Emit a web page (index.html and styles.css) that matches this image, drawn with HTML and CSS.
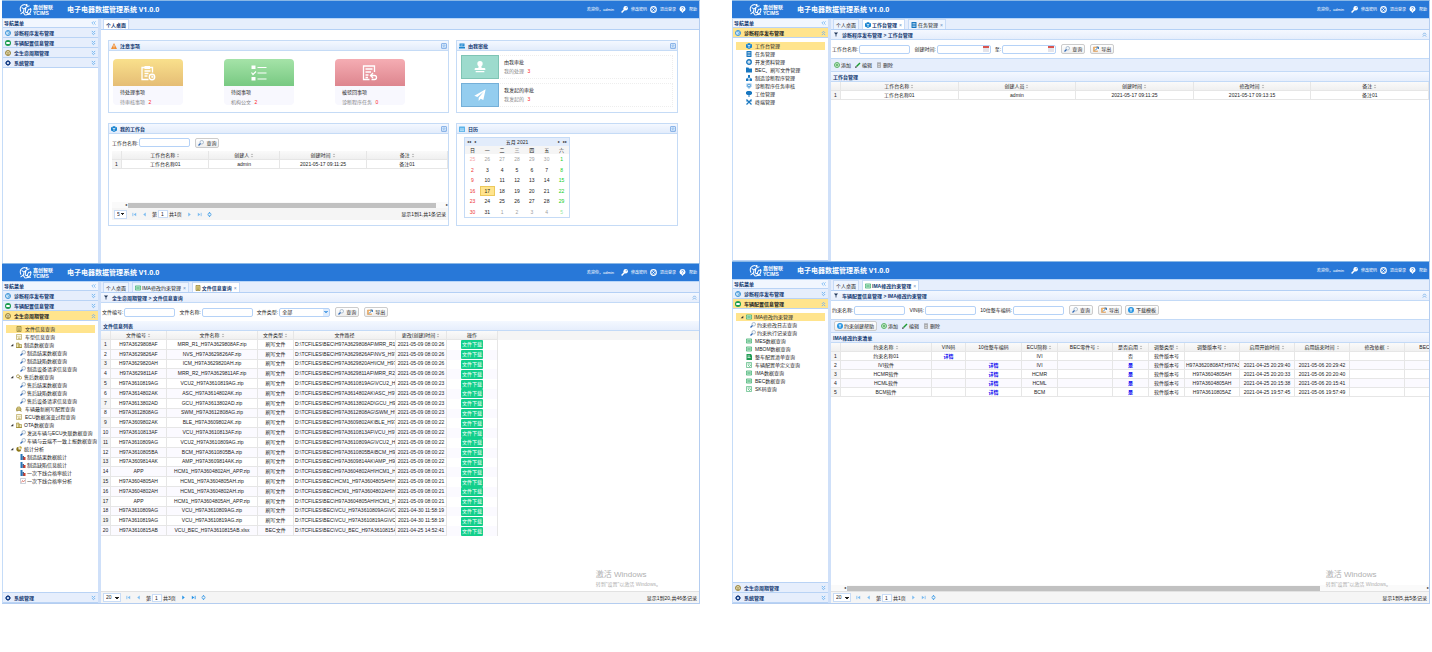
FILE: index.html
```html
<!DOCTYPE html>
<html lang="zh-CN">
<head>
	<meta charset="utf-8">
	<title>电子电器数据管理系统 V1.0.0</title>
	<meta name="viewport" content="width=device-width, initial-scale=1">
	<link rel="stylesheet" href="styles.css">
</head>
<body>

<!-- icon sprite -->
<svg class="sprite" aria-hidden="true">
	<symbol id="logo" viewBox="0 0 36 36"><g fill="none" stroke="#fff" stroke-width="2.800" stroke-linecap="round"><path d="M5 23C0 11 8 4 17 4M32 15c3 9-3 17-13 18"/><path d="M8 13l6 4 5-5 9-4M14 17l-2 8-7 5M19 13l-2 12 5 2M33 17h-6l-4 8 3 6h6M12 27l5 6"/></g><circle cx="21" cy="6" r="3" fill="#fff"/></symbol>
	<symbol id="key" viewBox="0 0 12 12"><circle cx="8" cy="4" r="3.800" fill="#fff"/><circle cx="9" cy="3" r="1" fill="#2878d8"/><path d="M6 6L1 11" stroke="#fff" stroke-width="2.600"/></symbol>
	<symbol id="exit" viewBox="0 0 12 12"><circle cx="6" cy="6" r="4.800" fill="none" stroke="#fff" stroke-width="2"/><path d="M4 4l4 4M8 4L4 8" stroke="#fff" stroke-width="1.500"/></symbol>
	<symbol id="help" viewBox="0 0 12 12"><path d="M6 0a5 5 0 0 1 2 9.600L6 12 4 9.600A5 5 0 0 1 6 0z" fill="#fff"/><path d="M4.500 4a1.600 1.600 0 1 1 2 1.500L6 6.500M6 7.500v1" fill="none" stroke="#2878d8" stroke-width="1.200"/></symbol>
	<symbol id="diag" viewBox="0 0 12 12"><circle cx="6" cy="6" r="5" fill="#d8ecfa" stroke="#3a93d6" stroke-width="2"/><path d="M4 3.500h3a2 2 0 0 1 0 4H6V9" fill="none" stroke="#3a93d6" stroke-width="1.500"/></symbol>
	<symbol id="car" viewBox="0 0 12 12"><circle cx="6" cy="6" r="6" fill="#1b9c50"/><rect x="2.500" y="4" width="7" height="4" rx="1" fill="#fff"/></symbol>
	<symbol id="life" viewBox="0 0 12 12"><circle cx="6" cy="6" r="5" fill="#e5dcb4" stroke="#8f7a2c" stroke-width="1.800"/><path d="M3 4l3 2.500L9 4M4 8.500h4" fill="none" stroke="#8f7a2c" stroke-width="1.400"/></symbol>
	<symbol id="gear" viewBox="0 0 12 12"><circle cx="6" cy="6" r="3.400" fill="none" stroke="#173f86" stroke-width="2.400"/><path d="M6 0v2M6 10v2M0 6h2M10 6h2M2 2l1.500 1.500M8.500 8.500L10 10M2 10l1.500-1.500M8.500 3.500L10 2" stroke="#173f86" stroke-width="2"/></symbol>
	<symbol id="down2" viewBox="0 0 12 12"><path d="M2 1l4 4 4-4M2 6l4 4 4-4" fill="none" stroke="#6cb2f0" stroke-width="2.200"/></symbol>
	<symbol id="up2" viewBox="0 0 12 12"><path d="M2 6l4-4 4 4M2 11l4-4 4 4" fill="none" stroke="#7bb2e8" stroke-width="2.200"/></symbol>
	<symbol id="left2" viewBox="0 0 12 12"><path d="M6 2L2 6l4 4M11 2L7 6l4 4" fill="none" stroke="#7abaf3" stroke-width="2"/></symbol>
	<symbol id="warn" viewBox="0 0 12 12"><path d="M6 0l6 12H0z" fill="#ee8d32"/><path d="M6 4v4M6 9v1.500" stroke="#fff" stroke-width="1.400"/></symbol>
	<symbol id="cube" viewBox="0 0 12 12"><path d="M6 0l6 3v6l-6 3-6-3V3z" fill="#1783cf"/><path d="M3 4l3 1.500L9 4M6 5.500V10" fill="none" stroke="#fff" stroke-width="1.400"/></symbol>
	<symbol id="inbox" viewBox="0 0 12 12"><path d="M1 1h10v6H1zM0 8h12v3H0z" fill="#1c86cf"/><path d="M3 3.500h6M3 5.500h4" stroke="#c9e5f8"/></symbol>
	<symbol id="cal" viewBox="0 0 12 12"><rect x="0" y="1" width="12" height="11" rx="1" fill="#5cb4ea"/><path d="M2 6h8M2 9h8M4 4v7M8 4v7" stroke="#dff1fd"/></symbol>
	<symbol id="list" viewBox="0 0 12 12"><rect x="1" width="10" height="12" rx="1" fill="#1877c0"/><path d="M3 3h6M3 6h6M3 9h6" stroke="#fff" stroke-width="1.100"/></symbol>
	<symbol id="ring" viewBox="0 0 12 12"><circle cx="6" cy="6" r="4.500" fill="none" stroke="#1877c0" stroke-width="2.800"/><circle cx="6" cy="6" r="1.200" fill="#1877c0"/></symbol>
	<symbol id="folder" viewBox="0 0 12 12"><path d="M0 1h5l1 2h6v8H0z" fill="#1877c0"/></symbol>
	<symbol id="tri" viewBox="0 0 12 12"><path d="M4 0h4v5H4zM0 7h5v5H0zM7 7h5v5H7z" fill="#1877c0"/><path d="M2.500 7L6 4l3.500 3" fill="none" stroke="#1877c0" stroke-width="1.500"/></symbol>
	<symbol id="shield" viewBox="0 0 12 12"><path d="M1 1h10v6l-5 5-5-5z" fill="#8cc2ec"/><circle cx="6" cy="5" r="2.500" fill="#fff" stroke="#1877c0" stroke-width="1.200"/></symbol>
	<symbol id="post" viewBox="0 0 12 12"><path d="M0 2l3-2h6l3 2v4L9 8H3L0 6zM5 8h2v4H5z" fill="#1877c0"/></symbol>
	<symbol id="tools" viewBox="0 0 12 12"><path d="M1 1l10 10M11 1L1 11" stroke="#1877c0" stroke-width="2.400"/><path d="M0 4h4M8 4h4" stroke="#1877c0" stroke-width="1.400"/></symbol>
	<symbol id="glass" viewBox="0 0 12 12"><circle cx="7.500" cy="4.500" r="3.600" fill="#f1f7fc" stroke="#8b9fb5" stroke-width="1.200"/><path d="M5 7L1 11" stroke="#2f68b5" stroke-width="2.400"/></symbol>
	<symbol id="docb" viewBox="0 0 12 12"><path d="M2 .8h8v10.400H2z" fill="#e8d98e" stroke="#806d1d" stroke-width="1.300"/><path d="M4 4h4M4 6.500h4M4 9h4" stroke="#806d1d"/></symbol>
	<symbol id="chip" viewBox="0 0 12 12"><path d="M1 1h10v10H1z" fill="#f9f5e0" stroke="#b3a04f" stroke-width="1.300"/><path d="M3 4l3 3 3-3M4 9h5" fill="none" stroke="#b3a04f" stroke-width="1.200"/></symbol>
	<symbol id="store" viewBox="0 0 12 12"><path d="M1 2h5v9H1zM6 5h5v6H6z" fill="#eee5b5" stroke="#9b872d" stroke-width="1.200"/><path d="M0 11h12M3 4h2" stroke="#9b872d" stroke-width="1.400"/></symbol>
	<symbol id="auto" viewBox="0 0 12 12"><path d="M1 6l2-4h5l2 4v3H1z" fill="#e5da9f" stroke="#96822a" stroke-width="1.300"/><path d="M2 9v2M8 9l3 2M1 6h9" stroke="#96822a" stroke-width="1.400"/></symbol>
	<symbol id="link" viewBox="0 0 12 12"><circle cx="4" cy="4.500" r="3" fill="none" stroke="#a08c38" stroke-width="1.500"/><circle cx="8.500" cy="7.500" r="2.800" fill="none" stroke="#a08c38" stroke-width="1.500"/></symbol>
	<symbol id="pie" viewBox="0 0 12 12"><path d="M5 1.500A5 5 0 1 0 10.500 7H5z" fill="#8d7717"/><path d="M7 0a5 5 0 0 1 5 5H7z" fill="#c7b04c"/></symbol>
	<symbol id="bars" viewBox="0 0 12 12"><path d="M1 0h4v12H1z" fill="#2776b8"/><path d="M5 4h3v8H5z" fill="#385f8e"/><path d="M7 6h4v6H7z" fill="#cf3f2c"/></symbol>
	<symbol id="chart" viewBox="0 0 12 12"><path d="M1 1h10v10H1z" fill="#fff" stroke="#98a5b5"/><path d="M3 9l2-4 2 3 3-4" fill="none" stroke="#ce4b3c" stroke-width="1.200"/></symbol>
	<symbol id="tag" viewBox="0 0 12 12"><path d="M.7 2h10.600v8H.7z" fill="#d6f3e1" stroke="#27a35c" stroke-width="1.400"/><path d="M2.500 6h7" stroke="#27a35c" stroke-width="2"/></symbol>
	<symbol id="tagfull" viewBox="0 0 12 12"><path d="M1 0h9l2 3v9H1z" fill="#1f9b53"/><path d="M3 4h5M3 7h6" stroke="#fff" stroke-width="1.400"/></symbol>
	<symbol id="tagbox" viewBox="0 0 12 12"><path d="M1 1h10v10H1z" fill="#f4fcf7" stroke="#27a35c" stroke-width="1.100"/><path d="M3 4h6M4 6l3 3 3-3" fill="none" stroke="#27a35c" stroke-width="1.200"/></symbol>
	<symbol id="export" viewBox="0 0 12 12"><path d="M1 2h8v9H1z" fill="#f2bd7c" stroke="#d98a3c"/><path d="M4 4h7v5H4z" fill="#fff"/><path d="M4 9l6-6M7 2h4v4" fill="none" stroke="#2b72b8" stroke-width="1.800"/></symbol>
	<symbol id="info" viewBox="0 0 12 12"><circle cx="6" cy="6" r="6" fill="#2795e3"/><path d="M3.500 4h5M6 4v5.500" stroke="#fff" stroke-width="1.800"/></symbol>
	<symbol id="add" viewBox="0 0 12 12"><circle cx="6" cy="6" r="5" fill="#eaf8ea" stroke="#2a9d3a" stroke-width="1.500"/><path d="M6 3v6M3 6h6" stroke="#2a9d3a" stroke-width="1.600"/></symbol>
	<symbol id="pen" viewBox="0 0 12 12"><path d="M3 9l7-7" stroke="#1c9a2f" stroke-width="3"/><path d="M0 12l1.500-4L4 10.500z" fill="#222"/></symbol>
	<symbol id="trash" viewBox="0 0 12 12"><path d="M3 3h6v8H3z" fill="#eee" stroke="#777"/><path d="M2 1.500h8M5 5v4M7 5v4" stroke="#777"/></symbol>
	<symbol id="funnel" viewBox="0 0 12 12"><path d="M1 1h10L7 6v5H5V6z" fill="#243b5e"/></symbol>
	<symbol id="tree" viewBox="0 0 12 12"><path d="M10 2v8H2z" fill="#333"/></symbol>
	<symbol id="sort" viewBox="0 0 8 12"><path d="M1 5l3-4 3 4zM1 7l3 4 3-4z" fill="#b7b7b7"/></symbol>
	<symbol id="first" viewBox="0 0 12 12"><path d="M2 2v8" stroke="currentColor" stroke-width="2"/><path d="M10 2v8L4 6z" fill="currentColor"/></symbol>
	<symbol id="prev" viewBox="0 0 12 12"><path d="M9 1v10L3 6z" fill="currentColor"/></symbol>
	<symbol id="next" viewBox="0 0 12 12"><path d="M3 1v10l6-5z" fill="currentColor"/></symbol>
	<symbol id="last" viewBox="0 0 12 12"><path d="M10 2v8" stroke="currentColor" stroke-width="2"/><path d="M2 2v8l6-4z" fill="currentColor"/></symbol>
	<symbol id="reload" viewBox="0 0 12 12"><circle cx="6" cy="6" r="3.600" fill="none" stroke="#3d9be6" stroke-width="2"/><path d="M6 0v3M6 9v3" stroke="#3d9be6" stroke-width="2"/></symbol>
	<symbol id="todo" viewBox="0 0 32 32"><g fill="none" stroke="#fff" stroke-width="2.600"><path d="M25 15V5H4v24h13M9 12h12M9 17h8M9 22h6"/><circle cx="24" cy="24" r="5.500"/><path d="M24 21v3h3"/></g><path d="M9 2h11v6H9z" fill="#fff"/></symbol>
	<symbol id="read" viewBox="0 0 32 32"><path d="M1 1h8v7H1zM1 24h8v7H1z" fill="#fff"/><path d="M13 5h18M13 16h18M13 28h18" stroke="#fff" stroke-width="2.400"/><path d="M1 15l3 4 6-6" fill="none" stroke="#fff" stroke-width="2.400"/></symbol>
	<symbol id="back" viewBox="0 0 32 32"><path d="M25 14V2H3v27h12M7 8h14M7 14h11M7 20h6M7 25h5" fill="none" stroke="#fff" stroke-width="2.600"/><path d="M18 21h7a4 4 0 0 1 0 8h-6M22 16l-5 5 5 5" fill="none" stroke="#fff" stroke-width="2.600"/></symbol>
	<symbol id="stamp" viewBox="0 0 36 36"><circle cx="18" cy="8" r="8" fill="#fff"/><path d="M14 14h8l1 7h8q3 0 3 3v3H2v-3q0-3 3-3h8zM5 30h26v4H5z" fill="#fff"/></symbol>
	<symbol id="plane" viewBox="0 0 36 36"><path d="M35 1L1 20l9 4L29 8 14 26v10l6-7 8 4z" fill="#fff"/></symbol>
</svg>

<main class="screens">

<div class="column">

	<!-- personal desktop -->
	<section class="window window-a">
		<header class="topbar">
			<svg class="logo"><use href="#logo"/></svg>
			<div class="brand"><b>嘉创智联</b><b>YCIMS</b></div>
			<h1>电子电器数据管理系统 V1.0.0</h1>
			<nav class="user"><span class="hello">欢迎你，admin</span><a href="#"><svg><use href="#key"/></svg>修改密码</a><a href="#"><svg><use href="#exit"/></svg>退出登录</a><a href="#"><svg><use href="#help"/></svg>帮助</a></nav>
		</header>
		<div class="body">
			<aside class="sidebar">
				<div class="nav-title">导航菜单<svg><use href="#left2"/></svg></div>
				<button class="nav"><svg><use href="#diag"/></svg>诊断程序发布管理<svg class="fold"><use href="#down2"/></svg></button>
				<button class="nav"><svg><use href="#car"/></svg>车辆配置信息管理<svg class="fold"><use href="#down2"/></svg></button>
				<button class="nav"><svg><use href="#life"/></svg>全生命周期管理<svg class="fold"><use href="#down2"/></svg></button>
				<button class="nav"><svg><use href="#gear"/></svg>系统管理<svg class="fold"><use href="#down2"/></svg></button>
			</aside>
			<div class="content">
				<div class="tabs"><button class="tab active">个人桌面</button></div>
				<div class="desktop">
					<section class="panel panel-top">
						<h2><svg><use href="#warn"/></svg>注意事项<button class="collapse" aria-label="收起"><svg><use href="#up2"/></svg></button></h2>
						<div class="cards">
							<div class="card"><div class="card-top yellow"><svg><use href="#todo"/></svg></div><b>待处理事项</b><span>待审核事项 <em>2</em></span></div>
							<div class="card"><div class="card-top green"><svg><use href="#read"/></svg></div><b>待阅事项</b><span>机构公文 <em>2</em></span></div>
							<div class="card"><div class="card-top red"><svg><use href="#back"/></svg></div><b>被驳回事项</b><span>诊断程序任务 <em>0</em></span></div>
						</div>
					</section>
					<section class="panel panel-top">
						<h2><svg><use href="#inbox"/></svg>由我审批<button class="collapse" aria-label="收起"><svg><use href="#up2"/></svg></button></h2>
						<div class="approvals">
							<div class="approval"><div class="tile mint"><svg><use href="#stamp"/></svg></div><div><b>由我审批</b><span>我的处理 <em>3</em></span></div></div>
							<div class="approval"><div class="tile sky"><svg><use href="#plane"/></svg></div><div><b>我发起的审批</b><span>我发起的 <em>3</em></span></div></div>
						</div>
					</section>
					<section class="panel panel-bottom">
						<h2><svg><use href="#cube"/></svg>我的工作台<button class="collapse" aria-label="收起"><svg><use href="#up2"/></svg></button></h2>
						<div class="bench">
							<form class="filter">
								<label>工作台名称:<input type="text"></label>
								<button type="button" class="btn"><svg><use href="#glass"/></svg>查询</button>
							</form>
							<table class="grid">
								<colgroup><col class="w-num"><col class="w-26"><col class="w-21"><col class="w-26"><col></colgroup>
								<thead><tr><th></th><th>工作台名称<svg><use href="#sort"/></svg></th><th>创建人<svg><use href="#sort"/></svg></th><th>创建时间<svg><use href="#sort"/></svg></th><th>备注<svg><use href="#sort"/></svg></th></tr></thead>
								<tbody><tr><td>1</td><td>工作台名称01</td><td>admin</td><td>2021-05-17 09:11:25</td><td>备注01</td></tr></tbody>
							</table>
							<div class="hscroll"><i>◂</i><div class="thumb"></div><i>▸</i></div>
							<div class="pager">
								<select aria-label="每页条数"><option>5</option></select>
								<button class="dim"><svg><use href="#first"/></svg></button><button class="dim"><svg><use href="#prev"/></svg></button>
								<label>第<input type="text" value="1">共1页</label>
								<button class="dim"><svg><use href="#next"/></svg></button><button class="dim"><svg><use href="#last"/></svg></button><button><svg><use href="#reload"/></svg></button>
								<span class="total">显示1到1,共1条记录</span>
							</div>
						</div>
					</section>
					<section class="panel panel-bottom">
						<h2><svg><use href="#cal"/></svg>日历<button class="collapse" aria-label="收起"><svg><use href="#up2"/></svg></button></h2>
						<div class="calendar">
							<div class="month"><span>◂◂</span><span>◂</span><b>五月 2021</b><span>▸</span><span>▸▸</span></div>
							<table>
								<thead><tr><th>日</th><th>一</th><th>二</th><th>三</th><th>四</th><th>五</th><th>六</th></tr></thead>
								<tbody id="days"></tbody>
							</table>
						</div>
					</section>
				</div>
			</div>
		</div>
	</section>

	<!-- file query -->
	<section class="window window-c">
		<header class="topbar">
			<svg class="logo"><use href="#logo"/></svg>
			<div class="brand"><b>嘉创智联</b><b>YCIMS</b></div>
			<h1>电子电器数据管理系统 V1.0.0</h1>
			<nav class="user"><span class="hello">欢迎你，admin</span><a href="#"><svg><use href="#key"/></svg>修改密码</a><a href="#"><svg><use href="#exit"/></svg>退出登录</a><a href="#"><svg><use href="#help"/></svg>帮助</a></nav>
		</header>
		<div class="body">
			<aside class="sidebar">
				<div class="nav-title">导航菜单<svg><use href="#left2"/></svg></div>
				<button class="nav"><svg><use href="#diag"/></svg>诊断程序发布管理<svg class="fold"><use href="#down2"/></svg></button>
				<button class="nav"><svg><use href="#car"/></svg>车辆配置信息管理<svg class="fold"><use href="#down2"/></svg></button>
				<button class="nav open"><svg><use href="#life"/></svg>全生命周期管理<svg class="fold"><use href="#up2"/></svg></button>
				<ul class="tree">
					<li class="selected"><svg><use href="#docb"/></svg>文件信息查询</li>
					<li><svg><use href="#chip"/></svg>车型信息查询</li>
					<li class="parent"><svg><use href="#tree"/></svg><svg><use href="#store"/></svg>制造数据查询</li>
					<li class="sub"><svg><use href="#glass"/></svg>制造结果数据查询</li>
					<li class="sub"><svg><use href="#glass"/></svg>制造缺陷数据查询</li>
					<li class="sub"><svg><use href="#glass"/></svg>制造设备请求信息查询</li>
					<li class="parent"><svg><use href="#tree"/></svg><svg><use href="#link"/></svg>售后数据查询</li>
					<li class="sub"><svg><use href="#glass"/></svg>售后结果数据查询</li>
					<li class="sub"><svg><use href="#glass"/></svg>售后缺陷数据查询</li>
					<li class="sub"><svg><use href="#glass"/></svg>售后设备请求信息查询</li>
					<li><svg><use href="#auto"/></svg>车辆最新刷写配置查询</li>
					<li><svg><use href="#chip"/></svg>ECU数据演变过程查询</li>
					<li class="parent"><svg><use href="#tree"/></svg><svg><use href="#store"/></svg>OTA数据查询</li>
					<li class="sub"><svg><use href="#glass"/></svg>发送车辆与ECU失联数据查询</li>
					<li class="sub"><svg><use href="#glass"/></svg>车辆与云端不一致上报数据查询</li>
					<li class="parent"><svg><use href="#tree"/></svg><svg><use href="#pie"/></svg>统计分析</li>
					<li class="sub"><svg><use href="#bars"/></svg>制造结果数据统计</li>
					<li class="sub"><svg><use href="#bars"/></svg>制造缺陷信息统计</li>
					<li class="sub"><svg><use href="#bars"/></svg>一次下线合格率统计</li>
					<li class="sub"><svg><use href="#chart"/></svg>一次下线合格率分析</li>
				</ul>
				<button class="nav"><svg><use href="#gear"/></svg>系统管理<svg class="fold"><use href="#down2"/></svg></button>
			</aside>
			<div class="content">
				<div class="tabs"><button class="tab">个人桌面</button><button class="tab"><svg><use href="#tag"/></svg>IMA修改约束管理<i>×</i></button><button class="tab active"><svg><use href="#docb"/></svg>文件信息查询<i>×</i></button></div>
				<div class="crumb"><svg><use href="#funnel"/></svg>全生命周期管理 &gt; 文件信息查询<svg class="fold"><use href="#up2"/></svg></div>
				<form class="filter">
					<label>文件编号:<input type="text"></label>
					<label>文件名称:<input type="text"></label>
					<label>文件类型:<select><option>全部</option></select></label>
					<button type="button" class="btn"><svg><use href="#glass"/></svg>查询</button>
					<button type="button" class="btn"><svg><use href="#export"/></svg>导出</button>
				</form>
				<h3>文件信息列表</h3>
				<div class="grid-wrap">
					<table class="grid files">
						<colgroup><col class="w-num"><col class="w-code"><col class="w-name"><col class="w-type"><col class="w-path"><col class="w-time"><col class="w-time"></colgroup>
						<thead><tr><th></th><th>文件编号<svg><use href="#sort"/></svg></th><th>文件名称<svg><use href="#sort"/></svg></th><th>文件类型<svg><use href="#sort"/></svg></th><th>文件路径</th><th>更改(创建)时间<svg><use href="#sort"/></svg></th><th>操作</th></tr></thead>
						<tbody id="files"></tbody>
					</table>
				</div>
				<div class="pager">
					<select aria-label="每页条数"><option>20</option></select>
					<button class="dim"><svg><use href="#first"/></svg></button><button class="dim"><svg><use href="#prev"/></svg></button>
					<label>第<input type="text" value="1">共3页</label>
					<button><svg><use href="#next"/></svg></button><button><svg><use href="#last"/></svg></button><button><svg><use href="#reload"/></svg></button>
					<span class="total">显示1到20,共46条记录</span>
				</div>
				<div class="activate"><p>激活 Windows</p><p>转到"设置"以激活 Windows。</p></div>
			</div>
		</div>
	</section>

</div>

<div class="column">

	<!-- workbench -->
	<section class="window window-b">
		<header class="topbar">
			<svg class="logo"><use href="#logo"/></svg>
			<div class="brand"><b>嘉创智联</b><b>YCIMS</b></div>
			<h1>电子电器数据管理系统 V1.0.0</h1>
			<nav class="user"><span class="hello">欢迎你，admin</span><a href="#"><svg><use href="#key"/></svg>修改密码</a><a href="#"><svg><use href="#exit"/></svg>退出登录</a><a href="#"><svg><use href="#help"/></svg>帮助</a></nav>
		</header>
		<div class="body">
			<aside class="sidebar">
				<div class="nav-title">导航菜单<svg><use href="#left2"/></svg></div>
				<button class="nav open"><svg><use href="#diag"/></svg>诊断程序发布管理<svg class="fold"><use href="#up2"/></svg></button>
				<ul class="tree">
					<li class="selected"><svg><use href="#cube"/></svg>工作台管理</li>
					<li><svg><use href="#list"/></svg>任务管理</li>
					<li><svg><use href="#ring"/></svg>开发资料管理</li>
					<li><svg><use href="#folder"/></svg>BEC、刷写文件管理</li>
					<li><svg><use href="#tri"/></svg>制造诊断程序管理</li>
					<li><svg><use href="#shield"/></svg>诊断程序任务审核</li>
					<li><svg><use href="#post"/></svg>工位管理</li>
					<li><svg><use href="#tools"/></svg>终端管理</li>
				</ul>
			</aside>
			<div class="content">
				<div class="tabs"><button class="tab">个人桌面</button><button class="tab active"><svg><use href="#cube"/></svg>工作台管理<i>×</i></button><button class="tab"><svg><use href="#list"/></svg>任务管理<i>×</i></button></div>
				<div class="crumb"><svg><use href="#funnel"/></svg>诊断程序发布管理 &gt; 工作台管理<svg class="fold"><use href="#up2"/></svg></div>
				<form class="filter">
					<label>工作台名称:<input type="text"></label>
					<label>创建时间:<input type="text" class="date"></label>
					<label>至:<input type="text" class="date"></label>
					<button type="button" class="btn"><svg><use href="#glass"/></svg>查询</button>
					<button type="button" class="btn"><svg><use href="#export"/></svg>导出</button>
				</form>
				<div class="toolbar"><button><svg><use href="#add"/></svg>添加</button><button><svg><use href="#pen"/></svg>编辑</button><button><svg><use href="#trash"/></svg>删除</button></div>
				<h3>工作台管理</h3>
				<div class="grid-wrap">
					<table class="grid">
						<colgroup><col class="w-num"><col><col><col><col><col></colgroup>
						<thead><tr><th></th><th>工作台名称<svg><use href="#sort"/></svg></th><th>创建人员<svg><use href="#sort"/></svg></th><th>创建时间<svg><use href="#sort"/></svg></th><th>修改时间<svg><use href="#sort"/></svg></th><th>备注<svg><use href="#sort"/></svg></th></tr></thead>
						<tbody><tr><td>1</td><td>工作台名称01</td><td>admin</td><td>2021-05-17 09:11:25</td><td>2021-05-17 09:13:15</td><td>备注01</td></tr></tbody>
					</table>
				</div>
			</div>
		</div>
	</section>

	<!-- IMA constraints -->
	<section class="window window-d">
		<header class="topbar">
			<svg class="logo"><use href="#logo"/></svg>
			<div class="brand"><b>嘉创智联</b><b>YCIMS</b></div>
			<h1>电子电器数据管理系统 V1.0.0</h1>
			<nav class="user"><span class="hello">欢迎你，admin</span><a href="#"><svg><use href="#key"/></svg>修改密码</a><a href="#"><svg><use href="#exit"/></svg>退出登录</a><a href="#"><svg><use href="#help"/></svg>帮助</a></nav>
		</header>
		<div class="body">
			<aside class="sidebar">
				<div class="nav-title">导航菜单<svg><use href="#left2"/></svg></div>
				<button class="nav"><svg><use href="#diag"/></svg>诊断程序发布管理<svg class="fold"><use href="#down2"/></svg></button>
				<button class="nav open"><svg><use href="#car"/></svg>车辆配置信息管理<svg class="fold"><use href="#up2"/></svg></button>
				<ul class="tree">
					<li class="parent selected"><svg><use href="#tree"/></svg><svg><use href="#tag"/></svg>IMA修改约束管理</li>
					<li class="sub"><svg><use href="#glass"/></svg>约束修改日志查询</li>
					<li class="sub"><svg><use href="#glass"/></svg>约束执行记录查询</li>
					<li><svg><use href="#tag"/></svg>MES数据查询</li>
					<li><svg><use href="#tag"/></svg>MBOM数据查询</li>
					<li><svg><use href="#tagfull"/></svg>整车配置清单查询</li>
					<li><svg><use href="#tagbox"/></svg>车辆配置单定义查询</li>
					<li><svg><use href="#tag"/></svg>IMA数据查询</li>
					<li><svg><use href="#tag"/></svg>BEC数据查询</li>
					<li><svg><use href="#tagbox"/></svg>SK码查询</li>
				</ul>
				<button class="nav"><svg><use href="#life"/></svg>全生命周期管理<svg class="fold"><use href="#down2"/></svg></button>
				<button class="nav"><svg><use href="#gear"/></svg>系统管理<svg class="fold"><use href="#down2"/></svg></button>
			</aside>
			<div class="content">
				<div class="tabs"><button class="tab">个人桌面</button><button class="tab active"><svg><use href="#tag"/></svg>IMA修改约束管理<i>×</i></button></div>
				<div class="crumb"><svg><use href="#funnel"/></svg>车辆配置信息管理 &gt; IMA修改约束管理<svg class="fold"><use href="#up2"/></svg></div>
				<form class="filter">
					<label>约束名称:<input type="text"></label>
					<label>VIN码:<input type="text"></label>
					<label>10位整车编码:<input type="text"></label>
					<button type="button" class="btn"><svg><use href="#glass"/></svg>查询</button>
					<button type="button" class="btn"><svg><use href="#export"/></svg>导出</button>
					<button type="button" class="btn tight"><svg><use href="#info"/></svg>下载模板</button>
				</form>
				<div class="toolbar"><button class="btn"><svg><use href="#info"/></svg>约束创建帮助</button><button><svg><use href="#add"/></svg>添加</button><button><svg><use href="#pen"/></svg>编辑</button><button><svg><use href="#trash"/></svg>删除</button></div>
				<h3>IMA修改约束清单</h3>
				<div class="grid-wrap">
					<table class="grid rules">
						<colgroup><col class="w-num"><col class="w-name"><col class="w-vin"><col class="w-code"><col class="w-type"><col class="w-part"><col class="w-type"><col class="w-type"><col class="w-part"><col class="w-part"><col class="w-part"><col class="w-part"><col class="w-part"></colgroup>
						<thead><tr><th></th><th>约束名称<svg><use href="#sort"/></svg></th><th>VIN码</th><th>10位整车编码</th><th>ECU简称<svg><use href="#sort"/></svg></th><th>BEC零件号<svg><use href="#sort"/></svg></th><th>是否启用<svg><use href="#sort"/></svg></th><th>调整类型<svg><use href="#sort"/></svg></th><th>调整版本号<svg><use href="#sort"/></svg></th><th>启用开始时间<svg><use href="#sort"/></svg></th><th>启用结束时间<svg><use href="#sort"/></svg></th><th>修改依据<svg><use href="#sort"/></svg></th><th>BEC版本号</th></tr></thead>
						<tbody>
							<tr><td>1</td><td>约束名称01</td><td><a href="#">详情</a></td><td></td><td>IVI</td><td></td><td>否</td><td>软件版本号</td><td></td><td></td><td></td><td></td><td></td></tr>
							<tr><td>2</td><td>IVI软件</td><td></td><td><a href="#">详情</a></td><td>IVI</td><td></td><td><a href="#">是</a></td><td>软件版本号</td><td>H97A3620808AT,H97A362</td><td>2021-04-25 20:29:40</td><td>2021-05-06 20:29:42</td><td></td><td></td></tr>
							<tr><td>3</td><td>HCMR软件</td><td></td><td><a href="#">详情</a></td><td>HCMR</td><td></td><td><a href="#">是</a></td><td>软件版本号</td><td>H97A3604805AH</td><td>2021-04-25 20:20:33</td><td>2021-05-06 20:20:40</td><td></td><td></td></tr>
							<tr><td>4</td><td>HCML软件</td><td></td><td><a href="#">详情</a></td><td>HCML</td><td></td><td><a href="#">是</a></td><td>软件版本号</td><td>H97A3604805AH</td><td>2021-04-25 20:15:38</td><td>2021-05-06 20:15:41</td><td></td><td></td></tr>
							<tr><td>5</td><td>BCM软件</td><td></td><td><a href="#">详情</a></td><td>BCM</td><td></td><td><a href="#">是</a></td><td>软件版本号</td><td>H97A3610805AZ</td><td>2021-04-25 19:57:45</td><td>2021-05-06 19:57:49</td><td></td><td></td></tr>
						</tbody>
					</table>
				</div>
				<div class="hscroll"><i>◂</i><div class="thumb"></div><i>▸</i></div>
				<div class="pager">
					<select aria-label="每页条数"><option>20</option></select>
					<button class="dim"><svg><use href="#first"/></svg></button><button class="dim"><svg><use href="#prev"/></svg></button>
					<label>第<input type="text" value="1">共1页</label>
					<button class="dim"><svg><use href="#next"/></svg></button><button class="dim"><svg><use href="#last"/></svg></button><button><svg><use href="#reload"/></svg></button>
					<span class="total">显示1到5,共5条记录</span>
				</div>
				<div class="activate"><p>激活 Windows</p><p>转到"设置"以激活 Windows。</p></div>
			</div>
		</div>
	</section>

</div>

</main>

<script src="script.js"></script>
</body>
</html>
```
FILE: styles.css
```css
* {
	box-sizing: border-box;
}

body {
	margin: 0;
	background: #fff;
	color: #222;
	font: 5px/8px "Liberation Sans", "Noto Sans CJK SC", sans-serif;
}

h1, h2, h3, p, ul {
	margin: 0;
	padding: 0;
}

button, input, select {
	font: inherit;
	color: inherit;
	margin: 0;
	padding: 0;
	border: 0;
	background: none;
}

button {
	white-space: nowrap;
}

a {
	text-decoration: none;
}

svg {
	width: 6px;
	height: 6px;
	flex: none;
}

.sprite {
	display: none;
}

.screens {
	display: grid;
	grid-template-columns: 1fr 1fr;
	gap: 32px;
	padding: 0 2px;
}

.column {
	min-width: 0;
}

.window {
	display: flex;
	flex-direction: column;
	border-top: 1px solid #8ab8e6;
	border-right: 1px solid #b4cdf0;
	overflow: hidden;
}

.window-a { min-height: 263px; }
.window-b { min-height: 261px; }
.window-c { min-height: 341px; }
.window-d { min-height: 343px; }

.window-c, .window-d {
	border-bottom: 1px solid #b4cdf0;
}

/* top bar */

.topbar {
	display: flex;
	align-items: center;
	height: 18px;
	padding: 0 2px 0 17px;
	background: #2878d8;
	border-bottom: 1px solid #b9d6f8;
	color: #fff;
}

.logo {
	width: 13px;
	height: 13px;
}

.brand {
	display: flex;
	flex-direction: column;
	width: 35px;
	padding-left: 1px;
	font-size: 5px;
	line-height: 6px;
}

.topbar h1 {
	font: bold 7px/10px "Open Sans", "Noto Sans CJK SC", sans-serif;
}

.user {
	display: flex;
	align-items: center;
	gap: 3px;
	margin-left: auto;
	font-size: 4px;
}

.user a {
	display: flex;
	align-items: center;
	gap: 3px;
	color: #fff;
}

.user svg {
	width: 7px;
	height: 7px;
}

.hello {
	margin-right: 4px;
}

/* sidebar */

.body {
	display: flex;
	flex: 1;
}

.sidebar {
	display: flex;
	flex-direction: column;
	width: 96px;
	flex: none;
	border-left: 1px solid #c5dcf8;
}

.nav-title, .nav {
	display: flex;
	align-items: center;
	height: 10px;
	padding: 0 2px;
	color: #12376f;
	font-weight: bold;
	border-bottom: 1px solid #b9d3f5;
	background: #e6eefc;
}

.nav-title {
	height: 9px;
	background: #f1f6fe;
	padding-left: 1px;
}

.nav-title svg, .fold {
	margin-left: auto;
	width: 5px;
}

.nav {
	gap: 3px;
}

.nav.open {
	background: #ffe48d;
	color: #222;
}

.tree {
	flex: 1;
	padding-top: 4px;
	list-style: none;
	border-bottom: 1px solid #b9d3f5;
}

.tree li {
	display: flex;
	align-items: center;
	gap: 3px;
	height: 8px;
	margin: 0 3px;
	padding-left: 10px;
	white-space: nowrap;
}

.tree .parent {
	gap: 2px;
	padding-left: 4px;
}

.tree .parent svg:first-child {
	width: 4px;
	height: 4px;
}

.tree .sub {
	gap: 1px;
	margin-right: 0;
	padding-left: 14px;
}

.tree .selected {
	background: #ffe48d;
}

/* content */

.content {
	position: relative;
	display: flex;
	flex: 1;
	flex-direction: column;
	min-width: 0;
	border-left: 3px solid #cfe0f9;
}

.tabs {
	display: flex;
	align-items: flex-end;
	gap: 3px;
	height: 11px;
	padding-left: 2px;
	background: #e6eefc;
	border-bottom: 1px solid #b4d0f5;
}

.tab {
	display: flex;
	align-items: center;
	gap: 1px;
	height: 10px;
	padding: 0 2px;
	background: #edf4fe;
	border: 1px solid #c7dbf7;
	border-bottom: 0;
}

.tab.active {
	background: #fff;
	color: #12376f;
	font-weight: bold;
}

.tab i {
	padding-left: 1px;
	font-style: normal;
	font-weight: normal;
	color: #6b8fc0;
}

.crumb, .content h3 {
	display: flex;
	align-items: center;
	height: 10px;
	padding: 0 2px;
	color: #12376f;
	font-weight: bold;
	font-size: 5px;
	background: linear-gradient(#f4f8ff, #e6eefc);
	border-bottom: 1px solid #c3daf7;
}

.crumb {
	gap: 3px;
}

.crumb svg {
	height: 5px;
}

.filter {
	display: flex;
	align-items: center;
	gap: 4px;
	height: 18px;
	padding-left: 1px;
}

.filter label {
	display: flex;
	align-items: center;
	gap: 1px;
	white-space: nowrap;
}

.filter input, .filter select {
	width: 51px;
	height: 9px;
	padding: 0 2px;
	background-color: #fff;
	border: 1px solid #b5d2f7;
	border-radius: 2px;
}

select {
	appearance: none;
	line-height: 7px;
}

.filter select {
	background:
		linear-gradient(45deg, transparent 50%, #5fa6e8 50%) right 3px center / 2px 2px no-repeat,
		linear-gradient(-45deg, transparent 50%, #5fa6e8 50%) right 1px center / 2px 2px no-repeat,
		linear-gradient(#e0edfd, #e0edfd) right / 6px 9px no-repeat;
}

.filter .date {
	width: 54px;
	background: linear-gradient(#d9544f 2px, #e4e4ea 2px) right 1px center / 6px 6px no-repeat;
}

.btn {
	display: flex;
	align-items: center;
	gap: 2px;
	height: 10px;
	padding: 0 2px;
	background: linear-gradient(#fff, #eee);
	border: 1px solid #ccc;
	border-radius: 2px;
}

.filter .btn {
	margin-left: 1px;
}

.filter .tight {
	margin-left: -1px;
}

.toolbar {
	display: flex;
	align-items: center;
	gap: 4px;
	height: 14px;
	padding-left: 3px;
	background: #e6eefc;
	border-top: 1px solid #c3daf7;
	border-bottom: 1px solid #c3daf7;
}

.toolbar button {
	display: flex;
	align-items: center;
	gap: 1px;
}

/* grids */

.grid-wrap {
	flex: 1;
	overflow: hidden;
	background: linear-gradient(#f5f5f5 9px, transparent 9px);
}

.grid {
	width: 100%;
	table-layout: fixed;
	border-collapse: separate;
	border-spacing: 0;
}

.grid th, .grid td {
	height: 9px;
	padding: 0 1px;
	line-height: 7px;
	text-align: center;
	white-space: nowrap;
	overflow: hidden;
	border-right: 1px solid #e6e6e6;
	border-bottom: 1px solid #e6e6e6;
}

.grid th {
	font-weight: normal;
	background: linear-gradient(#fafafa, #f0f0f0);
}

.grid th svg {
	width: 4px;
	height: 5px;
	margin-left: 1px;
	vertical-align: middle;
}

.grid td:first-child {
	background: #f5f5f5;
}

.grid a {
	color: #0000ee;
	font-weight: bold;
}

.grid tr:nth-child(even) td {
	background-color: #fbfaff;
}

.w-num { width: 10px; }
.w-26 { width: 26%; }
.w-21 { width: 21%; }
.w-code { width: 56px; }
.w-name { width: 91px; }
.w-type { width: 36px; }
.w-path { width: 102px; }
.w-time { width: 51px; }
.w-vin { width: 34px; }
.w-part { width: 55px; }

/* 20 rows plus the heading */
.files {
	width: 397px;
	height: 205px;
}

.files td:nth-child(5) {
	text-align: left;
}

.rules {
	width: 629px;
}

.download {
	display: block;
	height: 9px;
	margin: 0 auto;
	padding: 0 1px;
	color: #fff;
	background: #12cf8b;
	border-radius: 1px;
	line-height: 9px;
}

.files td:last-child {
	padding: 0;
	border-bottom: 0;
}

.hscroll {
	display: flex;
	align-items: center;
	gap: 1px;
	height: 6px;
	padding-left: 13px;
	background: #fafafa;
}

.hscroll i {
	font-style: normal;
	font-size: 4px;
}

.thumb {
	flex: 1;
	height: 5px;
	background: #c1c1c1;
}

.window-d .thumb {
	margin-right: 106px;
}

.window-a .thumb {
	margin-right: 9px;
}

.pager {
	display: flex;
	align-items: center;
	gap: 5px;
	height: 12px;
	padding: 0 2px;
	background: #f5f5f5;
	border-top: 1px solid #e2e2e2;
	white-space: nowrap;
}

.pager select {
	width: 18px;
	height: 9px;
	padding-left: 2px;
	border: 1px solid #c9dcf5;
	background:
		linear-gradient(45deg, transparent 50%, #222 50%) right 3px center / 2px 2px no-repeat,
		linear-gradient(-45deg, transparent 50%, #222 50%) right 1px center / 2px 2px no-repeat,
		#fff;
}

.window-a .pager select {
	width: 13px;
}

.pager button {
	display: flex;
	align-items: center;
	height: 8px;
	color: #2593e8;
}

.pager button svg {
	width: 5px;
	height: 5px;
}

.pager .dim {
	color: #7dbcf0;
}

.pager label {
	display: flex;
	align-items: center;
	gap: 1px;
}

.pager input {
	width: 10px;
	height: 8px;
	padding: 0 2px;
	background: #fff;
	border: 1px solid #c9dcf5;
}

.total {
	margin-left: auto;
}

.activate {
	position: absolute;
	right: 38px;
	bottom: 15px;
	color: #b0b0b0;
	line-height: 8px;
}

.activate p:first-child {
	font-size: 8px;
	line-height: 10px;
}

/* desktop panels */

.desktop {
	display: grid;
	grid-template-columns: 341fr 222fr;
	gap: 10px 7px;
	padding: 10px 21px 10px 7px;
}

.panel {
	min-width: 0;
	border: 1px solid #c5dbf6;
}

.panel-top { min-height: 73px; }
.panel-bottom { min-height: 103px; }

.panel h2 {
	display: flex;
	align-items: center;
	gap: 3px;
	height: 10px;
	padding: 0 1px 0 2px;
	color: #12376f;
	font-size: 5px;
	background: linear-gradient(#f4f8ff, #e2ecfb);
	border-bottom: 1px solid #c5dbf6;
}

.collapse {
	display: flex;
	align-items: center;
	justify-content: center;
	width: 6px;
	height: 6px;
	margin-left: auto;
	background: #d5e6fb;
	border: 1px solid #8db5e8;
	border-radius: 1px;
}

.collapse svg {
	width: 4px;
	height: 4px;
}

.cards {
	display: flex;
	gap: 41px;
	padding: 8px 4px 6px;
}

.card {
	width: 70px;
	height: 46px;
	background: #f8f8fe;
	border-radius: 4px;
	overflow: hidden;
}

.card-top {
	display: flex;
	align-items: center;
	justify-content: center;
	height: 27px;
	margin-bottom: 2px;
}

.card-top svg {
	width: 16px;
	height: 16px;
}

.card b, .card span {
	display: block;
	padding-left: 7px;
	font-weight: normal;
}

.card span, .approval span {
	color: #888;
}

.card span {
	padding-top: 2px;
}

em {
	margin-left: 2px;
	font-style: normal;
	color: #f22;
}

.yellow { background: linear-gradient(#f9e08c, #e5bd75); }
.green { background: linear-gradient(#a5e3a8, #78c982); }
.red { background: linear-gradient(#f5adb3, #dd858e); }

.approvals {
	display: grid;
	gap: 4px;
	padding: 4px;
}

.approval {
	display: flex;
	gap: 5px;
	height: 24px;
	border: 1px dotted #eee;
	border-left: 0;
}

.approval b, .approval span {
	display: block;
	font-weight: normal;
	line-height: 9px;
}

.approval > div:last-child {
	padding-top: 2px;
}

.tile {
	display: flex;
	align-items: center;
	justify-content: center;
	width: 38px;
	margin: -1px 0;
}

.tile svg {
	width: 12px;
	height: 12px;
}

.mint { background: #9ddbcd; border: 1px solid #7fc4b4; }
.sky { background: #94cdef; border: 1px solid #74afd8; }

.bench {
	padding-left: 3px;
}

.bench .filter {
	height: 17px;
	padding-left: 0;
}

.bench .hscroll {
	margin-top: 33px;
}

.bench .pager {
	border-top: 0;
}

.calendar {
	width: 106px;
	margin: 3px 7px;
	border: 1px solid #c5dbf6;
}

.month {
	display: flex;
	align-items: center;
	gap: 3px;
	height: 8px;
	padding: 0 2px;
	background: #e2ecfb;
}

.month b {
	flex: 1;
	text-align: center;
	font-weight: normal;
}

.month span {
	font-size: 4px;
}

.calendar table {
	width: 100%;
	height: 71px;
	table-layout: fixed;
	border-collapse: collapse;
}

.calendar th, .calendar td {
	padding: 0;
	text-align: center;
	font-weight: normal;
}

.calendar th {
	height: 8px;
	background: #f5f5f5;
}

.calendar td:first-child { color: #e33; }
.calendar td:last-child { color: #1c2; }
.calendar .other { opacity: .45; }

.calendar .today {
	background: #ffe48d;
	outline: 1px solid #ecc95c;
	outline-offset: -1px;
}
```
FILE: script.js
```js
const files = [
	['H97A3629808AF', 'MRR_R1_H97A3629808AF.zip', 'H97A3629808AF\\MRR_R1_H97A3629808AF.zip', '2021-05-09 08:00:26'],
	['H97A3629826AF', 'NVS_H97A3629826AF.zip', 'H97A3629826AF\\NVS_H97A3629826AF.zip', '2021-05-09 08:00:26'],
	['H97A3629820AH', 'ICM_H97A3629820AH.zip', 'H97A3629820AH\\ICM_H97A3629820AH.zip', '2021-05-09 08:00:26'],
	['H97A3629811AF', 'MRR_R2_H97A3629811AF.zip', 'H97A3629811AF\\MRR_R2_H97A3629811AF.zip', '2021-05-09 08:00:26'],
	['H97A3610819AG', 'VCU2_H97A3610819AG.zip', 'H97A3610819AG\\VCU2_H97A3610819AG.zip', '2021-05-09 08:00:23'],
	['H97A3614802AK', 'ASC_H97A3614802AK.zip', 'H97A3614802AK\\ASC_H97A3614802AK.zip', '2021-05-09 08:00:23'],
	['H97A3613802AD', 'GCU_H97A3613802AD.zip', 'H97A3613802AD\\GCU_H97A3613802AD.zip', '2021-05-09 08:00:23'],
	['H97A3612808AG', 'SWM_H97A3612808AG.zip', 'H97A3612808AG\\SWM_H97A3612808AG.zip', '2021-05-09 08:00:23'],
	['H97A3609802AK', 'BLE_H97A3609802AK.zip', 'H97A3609802AK\\BLE_H97A3609802AK.zip', '2021-05-09 08:00:22'],
	['H97A3610813AF', 'VCU_H97A3610813AF.zip', 'H97A3610813AF\\VCU_H97A3610813AF.zip', '2021-05-09 08:00:22'],
	['H97A3610809AG', 'VCU2_H97A3610809AG.zip', 'H97A3610809AG\\VCU2_H97A3610809AG.zip', '2021-05-09 08:00:22'],
	['H97A3610805BA', 'BCM_H97A3610805BA.zip', 'H97A3610805BA\\BCM_H97A3610805BA.zip', '2021-05-09 08:00:22'],
	['H97A3609814AK', 'AMP_H97A3609814AK.zip', 'H97A3609814AK\\AMP_H97A3609814AK.zip', '2021-05-09 08:00:22'],
	['APP', 'HCM1_H97A3604802AH_APP.zip', 'H97A3604802AH\\HCM1_H97A3604802AH_APP.zip', '2021-05-09 08:00:21'],
	['H97A3604805AH', 'HCM1_H97A3604805AH.zip', 'HCM1_H97A3604805AH\\HCM1_H97A3604805AH.zip', '2021-05-09 08:00:21'],
	['H97A3604802AH', 'HCM1_H97A3604802AH.zip', 'HCM1_H97A3604802AH\\HCM1_H97A3604802AH.zip', '2021-05-09 08:00:21'],
	['APP', 'HCM1_H97A3604805AH_APP.zip', 'H97A3604805AH\\HCM1_H97A3604805AH_APP.zip', '2021-05-09 08:00:21'],
	['H97A3610809AG', 'VCU_H97A3610809AG.zip', 'VCU_H97A3610809AG\\VCU_H97A3610809AG.zip', '2021-04-30 11:58:19'],
	['H97A3610819AG', 'VCU_H97A3610819AG.zip', 'VCU_H97A3610819AG\\VCU_H97A3610819AG.zip', '2021-04-30 11:58:19'],
	['H97A3610815AB', 'VCU_BEC_H97A3610815AB.xlsx', 'VCU_BEC_H97A3610815AB.xlsx', '2021-04-25 14:52:41']
]

document.getElementById('files').innerHTML = files.map(([code, name, path, time], i) => `<tr>
	<td>${i + 1}</td><td>${code}</td><td>${name}</td><td>${name.endsWith('.xlsx') ? 'BEC文件' : '刷写文件'}</td>
	<td>D:\\TCFILES\\BEC\\${path}</td><td>${time}</td><td><button class="download">文件下载</button></td>
</tr>`).join('')

// May 2021, weeks start on Sunday
let days = ''
for (let week = 0; week < 6; week++) {
	days += '<tr>'
	for (let d = 0; d < 7; d++) {
		let date = new Date(2021, 3, 25 + week * 7 + d)
		let cls = date.getMonth() != 4 ? 'other' : date.getDate() == 17 ? 'today' : ''
		days += `<td class="${cls}">${date.getDate()}</td>`
	}
	days += '</tr>'
}
document.getElementById('days').innerHTML = days
```
